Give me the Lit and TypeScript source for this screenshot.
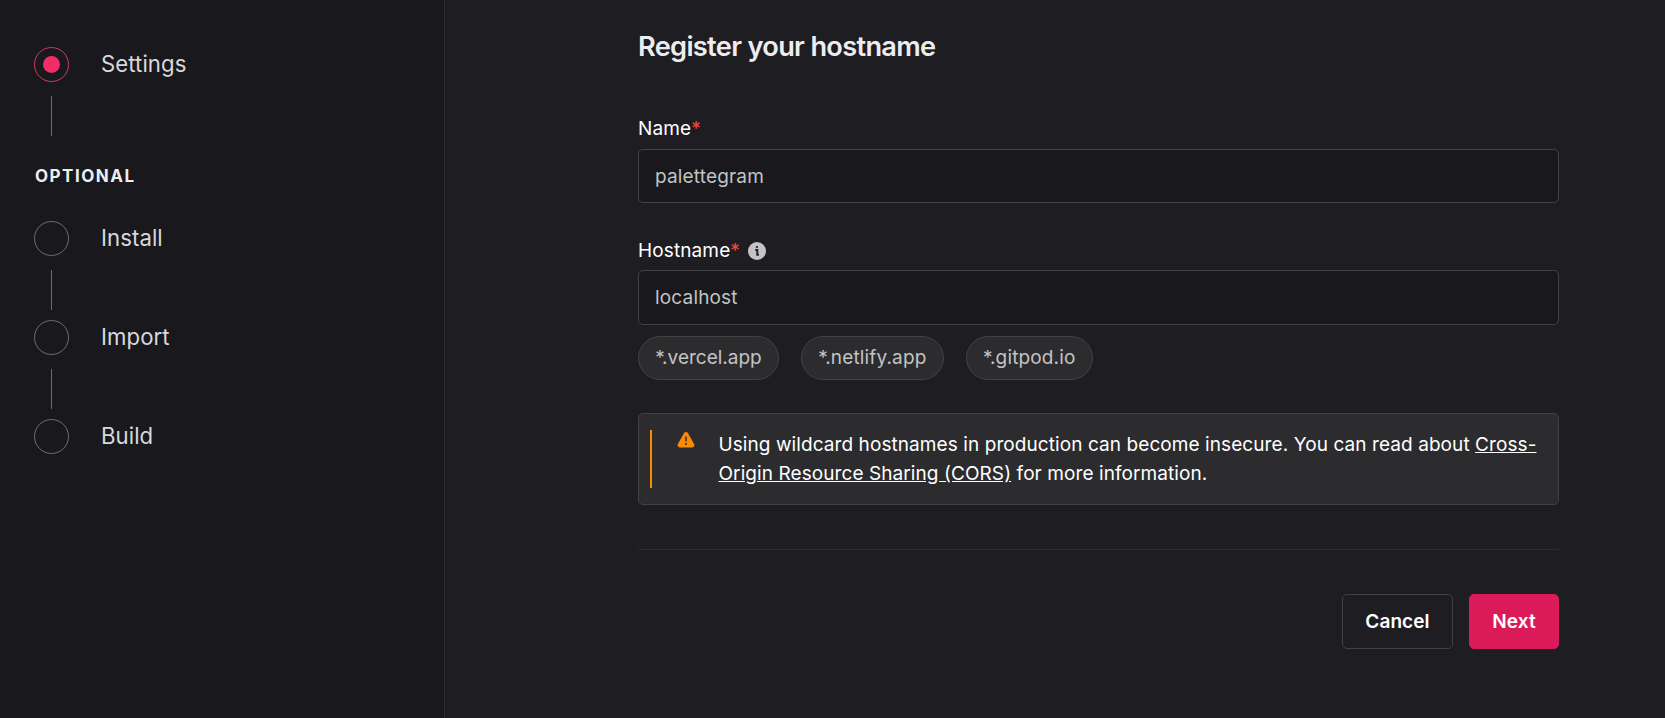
import { LitElement, html, css, svg } from "lit";
import { customElement, property } from "lit/decorators.js";

@customElement("wizard-step")
class WizardStep extends LitElement {
  @property() label = "";
  @property({ type: Boolean }) active = false;
  @property({ type: Boolean }) connected = false;

  static styles = css`
    :host { display: block; }
    .row { display: flex; align-items: center; gap: 32px; height: 35px; }
    .ring {
      box-sizing: border-box; width: 35px; height: 35px; border-radius: 50%;
      border: 1px solid #6c6c71; display: grid; place-items: center; flex: none;
    }
    .ring.active { border-color: #db3464; }
    .dot { width: 17px; height: 17px; border-radius: 50%; background: #f02e65; }
    .label {
      font-size: 22.2px; line-height: 33px; letter-spacing: 0.06px; color: #d8d8db;
      padding-bottom: 2px;
    }
    .line { width: 1px; height: 40px; margin: 14px 0 10px 17px; background: #6c6c71; }
  `;

  render() {
    return html`
      <div class="row">
        <div class="ring ${this.active ? "active" : ""}">
          ${this.active ? html`<div class="dot"></div>` : ""}
        </div>
        <div class="label">${this.label}</div>
      </div>
      ${this.connected ? html`<div class="line"></div>` : ""}
    `;
  }
}

const infoIcon = svg`
  <svg class="info" viewBox="0 0 18 18" aria-hidden="true">
    <circle cx="9" cy="9" r="9" fill="#c3c3c6"/>
    <circle cx="8.9" cy="5.1" r="1.1" fill="#1f1e23"/>
    <path d="M7.3 8.1H9.3V12.8H10.9" fill="none" stroke="#1f1e23" stroke-width="2"/>
  </svg>`;

const warningIcon = svg`
  <svg class="warn" viewBox="0 0 18 16" aria-hidden="true">
    <path d="M7.1 1.1a2.2 2.2 0 0 1 3.8 0l6.2 11a2.2 2.2 0 0 1-1.9 3.3H2.8A2.2 2.2 0 0 1 .9 12.1z" fill="#f98b07"/>
    <path d="M9 4.9v4" stroke="#2c2c2f" stroke-width="1.4" stroke-linecap="round"/>
    <circle cx="9" cy="12.1" r="1" fill="#2c2c2f"/>
  </svg>`;

@customElement("app-root")
class AppRoot extends LitElement {
  static styles = css`
    :host {
      display: flex; box-sizing: border-box; width: 100%; height: 718px; overflow: hidden;
      font-family: Inter, "Liberation Sans", sans-serif; font-size: 19px;
      color: #fff; background: #1e1d22;
    }
    .side {
      box-sizing: border-box; width: 445px; flex: none; padding: 47px 0 0 34px;
      background: #19181c; border-right: 1px solid #2d2d31;
    }
    .group {
      margin: 28px 0 32px 1px; height: 25px; line-height: 25px;
      font-size: 17px; font-weight: 700; letter-spacing: 1.5px; color: #ededf0;
    }
    .main { flex: 1; padding: 28px 106px 0 193px; }
    h1 {
      margin: 0 0 52px; height: 38px; line-height: 38px; font-size: 27.2px;
      font-weight: 600; letter-spacing: -0.68px; color: #ededf0;
    }
    .label {
      display: flex; align-items: center; height: 20px; line-height: 20px;
      letter-spacing: 0.12px; padding-top: 1px;
    }
    .req { color: #ff453a; }
    .info { width: 18px; height: 18px; margin: 0 0 0 8px; }
    .input {
      box-sizing: border-box; width: 100%; height: 54px; padding: 0 16px;
      display: block; border: 1px solid #414146; border-radius: 5px;
      background: #19181c; color: #c3c3c6; font: inherit; letter-spacing: 0.17px; outline: none;
    }
    .name { margin-bottom: 37px; }
    .name .input { margin-top: 10px; }
    .host .input { margin-top: 9px; height: 55px; padding-bottom: 1px; }
    .chips { display: flex; gap: 22px; margin-top: 11px; }
    .chip {
      box-sizing: border-box; height: 44px; padding: 0 16.2px 1px; border-radius: 22px;
      border: 1px solid #414146; background: #2c2c2f; color: #c3c3c6;
      font: inherit; letter-spacing: 0; display: flex; align-items: center;
    }
    .chip + .chip { letter-spacing: 0.15px; }
    .alert {
      box-sizing: border-box; margin-top: 33px; height: 92px; padding: 16px 11px 0;
      display: flex; border: 1px solid #414146; border-radius: 5px; background: #2c2c2f;
    }
    .bar { width: 2px; height: 58px; background: #f98b07; flex: none; }
    .warn { width: 18px; height: 16px; margin: 2px 24px 0 24.5px; flex: none; }
    .text { line-height: 29px; white-space: nowrap; letter-spacing: 0.08px; }
    .text a { color: inherit; text-decoration: underline; }
    .actions {
      display: flex; justify-content: flex-end; gap: 16px; margin-top: 44px;
      padding-top: 44px; border-top: 1px solid #2d2d31;
    }
    .btn {
      box-sizing: border-box; height: 55px; border-radius: 5px; padding: 0 0 1px;
      font: inherit; font-weight: 600; letter-spacing: 0.1px; color: #fff; width: 111px;
      border: 1px solid #414146; background: transparent;
    }
    .btn.primary { width: 90px; border-color: #db1a5a; background: #db1a5a; }
  `;

  render() {
    return html`
      <aside class="side">
        <wizard-step label="Settings" active connected></wizard-step>
        <div class="group">OPTIONAL</div>
        <wizard-step label="Install" connected></wizard-step>
        <wizard-step label="Import" connected></wizard-step>
        <wizard-step label="Build"></wizard-step>
      </aside>
      <main class="main">
        <h1>Register your hostname</h1>
        <div class="name">
          <div class="label">Name<span class="req">*</span></div>
          <input class="input" .value=${"palettegram"} />
        </div>
        <div class="host">
          <div class="label">Hostname<span class="req">*</span>${infoIcon}</div>
          <input class="input" .value=${"localhost"} />
        </div>
        <div class="chips">
          ${["*.vercel.app", "*.netlify.app", "*.gitpod.io"].map(
            (h) => html`<button class="chip">${h}</button>`
          )}
        </div>
        <div class="alert">
          <div class="bar"></div>
          ${warningIcon}
          <div class="text">
            Using wildcard hostnames in production can become insecure. You can read about
            <a>Cross-<br />Origin Resource Sharing (CORS)</a> for more information.
          </div>
        </div>
        <div class="actions">
          <button class="btn">Cancel</button>
          <button class="btn primary">Next</button>
        </div>
      </main>
    `;
  }
}
